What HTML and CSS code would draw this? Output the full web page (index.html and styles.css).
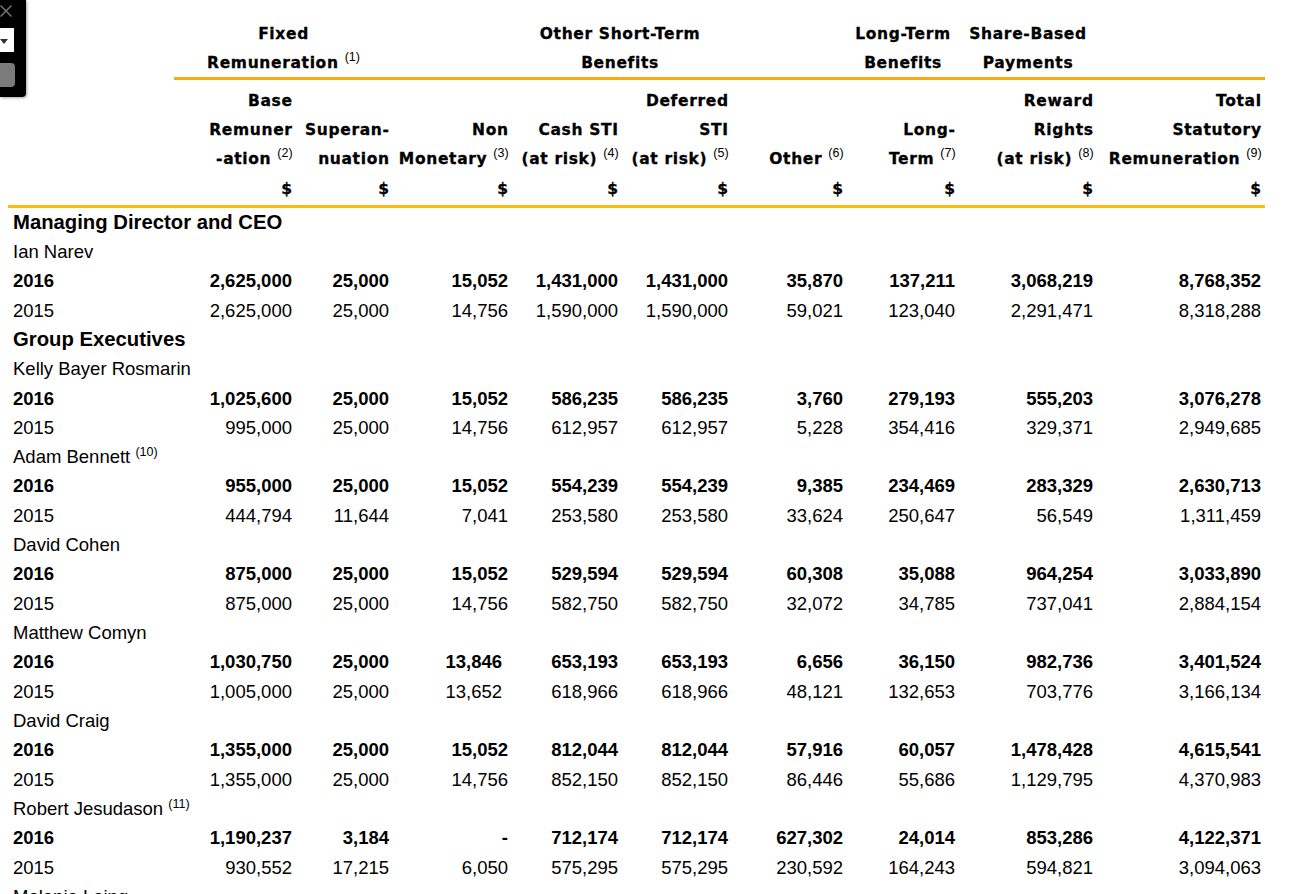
FILE: index.html
```html
<!DOCTYPE html>
<html lang="en">
<head>
<meta charset="utf-8">
<title>Remuneration</title>
<link rel="stylesheet" href="styles.css">
</head>
<body>
<div class="toolbar">
  <svg class="tb-close" width="14" height="18" viewBox="0 0 14 18"><path d="M0.5 5.5 L11.5 16.5 M11.5 5.5 L0.5 16.5" stroke="#7d7d7d" stroke-width="1.4" fill="none"/></svg>
  <div class="tb-select"><svg width="8" height="6" viewBox="0 0 8 6"><path d="M0 0 H8 L4 5 Z" fill="#333"/></svg></div>
  <div class="tb-btn"></div>
</div>

<table class="report">
  <colgroup>
    <col class="c-label"><col class="c1"><col class="c2"><col class="c3"><col class="c4"><col class="c5"><col class="c6"><col class="c7"><col class="c8"><col class="c9">
  </colgroup>
  <thead>
    <tr class="group">
      <th></th>
      <th class="grp" colspan="2"><span class="gt">Fixed<br>Remuneration <span class="fn">(1)</span></span></th>
      <th class="grp" colspan="4"><span class="gt">Other Short-Term<br>Benefits</span></th>
      <th class="grp"><span class="gt">Long-Term<br>Benefits</span></th>
      <th class="grp"><span class="gt">Share-Based<br>Payments</span></th>
      <th class="grp"></th>
    </tr>
    <tr class="cols">
      <th></th>
      <th>Base<br>Remuner<br>-ation <span class="fn">(2)</span><br>$</th>
      <th>Superan-<br>nuation<br>$</th>
      <th>Non<br>Monetary <span class="fn">(3)</span><br>$</th>
      <th>Cash STI<br>(at risk) <span class="fn">(4)</span><br>$</th>
      <th>Deferred<br>STI<br>(at risk) <span class="fn">(5)</span><br>$</th>
      <th>Other <span class="fn">(6)</span><br>$</th>
      <th>Long-<br>Term <span class="fn">(7)</span><br>$</th>
      <th>Reward<br>Rights<br>(at risk) <span class="fn">(8)</span><br>$</th>
      <th>Total<br>Statutory<br>Remuneration <span class="fn">(9)</span><br>$</th>
    </tr>
  </thead>
  <tbody>
    <tr class="section"><td class="label" colspan="10">Managing Director and CEO</td></tr>
    <tr class="name"><td class="label" colspan="10">Ian Narev</td></tr>
    <tr class="cur"><td class="label">2016</td><td>2,625,000</td><td>25,000</td><td>15,052</td><td>1,431,000</td><td>1,431,000</td><td>35,870</td><td>137,211</td><td>3,068,219</td><td>8,768,352</td></tr>
    <tr class="prev"><td class="label">2015</td><td>2,625,000</td><td>25,000</td><td>14,756</td><td>1,590,000</td><td>1,590,000</td><td>59,021</td><td>123,040</td><td>2,291,471</td><td>8,318,288</td></tr>

    <tr class="section"><td class="label" colspan="10">Group Executives</td></tr>
    <tr class="name"><td class="label" colspan="10">Kelly Bayer Rosmarin</td></tr>
    <tr class="cur"><td class="label">2016</td><td>1,025,600</td><td>25,000</td><td>15,052</td><td>586,235</td><td>586,235</td><td>3,760</td><td>279,193</td><td>555,203</td><td>3,076,278</td></tr>
    <tr class="prev"><td class="label">2015</td><td>995,000</td><td>25,000</td><td>14,756</td><td>612,957</td><td>612,957</td><td>5,228</td><td>354,416</td><td>329,371</td><td>2,949,685</td></tr>

    <tr class="name"><td class="label" colspan="10">Adam Bennett <span class="fn">(10)</span></td></tr>
    <tr class="cur"><td class="label">2016</td><td>955,000</td><td>25,000</td><td>15,052</td><td>554,239</td><td>554,239</td><td>9,385</td><td>234,469</td><td>283,329</td><td>2,630,713</td></tr>
    <tr class="prev"><td class="label">2015</td><td>444,794</td><td>11,644</td><td>7,041</td><td>253,580</td><td>253,580</td><td>33,624</td><td>250,647</td><td>56,549</td><td>1,311,459</td></tr>

    <tr class="name"><td class="label" colspan="10">David Cohen</td></tr>
    <tr class="cur"><td class="label">2016</td><td>875,000</td><td>25,000</td><td>15,052</td><td>529,594</td><td>529,594</td><td>60,308</td><td>35,088</td><td>964,254</td><td>3,033,890</td></tr>
    <tr class="prev"><td class="label">2015</td><td>875,000</td><td>25,000</td><td>14,756</td><td>582,750</td><td>582,750</td><td>32,072</td><td>34,785</td><td>737,041</td><td>2,884,154</td></tr>

    <tr class="name"><td class="label" colspan="10">Matthew Comyn</td></tr>
    <tr class="cur"><td class="label">2016</td><td>1,030,750</td><td>25,000</td><td class="nudge">13,846</td><td>653,193</td><td>653,193</td><td>6,656</td><td>36,150</td><td>982,736</td><td>3,401,524</td></tr>
    <tr class="prev"><td class="label">2015</td><td>1,005,000</td><td>25,000</td><td class="nudge">13,652</td><td>618,966</td><td>618,966</td><td>48,121</td><td>132,653</td><td>703,776</td><td>3,166,134</td></tr>

    <tr class="name"><td class="label" colspan="10">David Craig</td></tr>
    <tr class="cur"><td class="label">2016</td><td>1,355,000</td><td>25,000</td><td>15,052</td><td>812,044</td><td>812,044</td><td>57,916</td><td>60,057</td><td>1,478,428</td><td>4,615,541</td></tr>
    <tr class="prev"><td class="label">2015</td><td>1,355,000</td><td>25,000</td><td>14,756</td><td>852,150</td><td>852,150</td><td>86,446</td><td>55,686</td><td>1,129,795</td><td>4,370,983</td></tr>

    <tr class="name"><td class="label" colspan="10">Robert Jesudason <span class="fn">(11)</span></td></tr>
    <tr class="cur"><td class="label">2016</td><td>1,190,237</td><td>3,184</td><td>-</td><td>712,174</td><td>712,174</td><td>627,302</td><td>24,014</td><td>853,286</td><td>4,122,371</td></tr>
    <tr class="prev"><td class="label">2015</td><td>930,552</td><td>17,215</td><td>6,050</td><td>575,295</td><td>575,295</td><td>230,592</td><td>164,243</td><td>594,821</td><td>3,094,063</td></tr>

    <tr class="name"><td class="label" colspan="10">Melanie Laing</td></tr>
  </tbody>
</table>
</body>
</html>
```

FILE: styles.css
```css
html {
  overflow: hidden;
}

body {
  margin: 8px;
  background: #fff;
  color: #000;
  font-family: "Liberation Sans", Arial, sans-serif;
}

/* floating toolbar in the corner */
.toolbar {
  position: absolute;
  top: 0;
  left: 0;
  width: 26px;
  height: 97px;
  background: #000;
  border-bottom-right-radius: 4px;
  box-shadow: 1px 1px 3px rgba(0, 0, 0, 0.35);
  z-index: 10;
}

.tb-close {
  position: absolute;
  top: 0;
  left: 0;
}

.tb-select {
  position: absolute;
  top: 28px;
  left: 0;
  width: 14px;
  height: 24px;
  background: #fff;
  display: flex;
  align-items: center;
}

.tb-select svg {
  margin-top: 3px;
}

.tb-btn {
  position: absolute;
  top: 63px;
  left: 0;
  width: 15px;
  height: 24px;
  background: #7b7b7b;
  border-radius: 0 4px 4px 0;
}

/* table */
.report {
  margin-top: 11.5px;
  width: 1257px;
  table-layout: fixed;
  border-collapse: separate;
  border-spacing: 0;
  font-size: 18.5px;
  line-height: 29.32px;
}

.c-label { width: 166px; }
.c1 { width: 122px; }
.c2 { width: 97px; }
.c3 { width: 119px; }
.c4 { width: 110px; }
.c5 { width: 110px; }
.c6 { width: 115px; }
.c7 { width: 112px; }
.c8 { width: 138px; }
.c9 { width: 168px; }

.report th,
.report td {
  padding: 0 4px 0 0;
  text-align: right;
  white-space: nowrap;
  font-weight: normal;
}

.report thead th {
  font-family: "DejaVu Sans", Verdana, sans-serif;
  font-weight: bold;
  font-size: 15.5px;
  letter-spacing: 0.65px;
  -webkit-text-stroke: 0.3px #000;
  vertical-align: bottom;
  padding-right: 3.4px;
}

.group .grp {
  text-align: center;
  padding: 0;
  border-bottom: 3px solid #f9a912;
}

/* glyphs of the group headings sit slightly lower, close to the rule */
.gt {
  display: block;
  margin-bottom: -1.5px;
}

.cols th {
  padding-top: 7px;
  padding-bottom: 0.8px;
  border-bottom: 3px solid #fdba12;
}

.fn {
  font-family: "Liberation Sans", Arial, sans-serif;
  font-weight: normal;
  font-size: 12.5px;
  letter-spacing: 0;
  -webkit-text-stroke: 0;
  line-height: 0;
  vertical-align: 7px;
}

.report td.label {
  text-align: left;
  padding-left: 5px;
}

.section td {
  font-weight: bold;
  font-size: 20.3px;
}

.cur td {
  font-weight: bold;
}

.report td.nudge {
  padding-right: 10px;
}
```
